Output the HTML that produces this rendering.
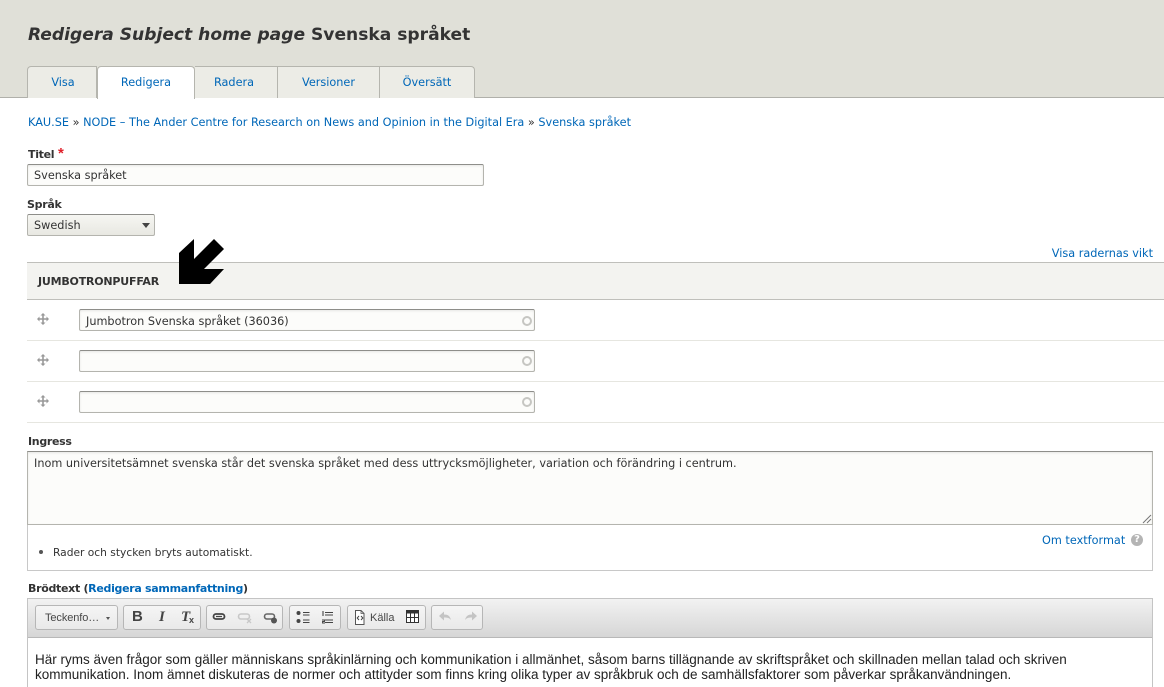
<!DOCTYPE html>
<html><head><meta charset="utf-8"><style>
html,body{margin:0;padding:0;background:#fff;width:1164px;height:687px;overflow:hidden}
body{position:relative;font-family:"DejaVu Sans","Liberation Sans",sans-serif;font-size:11.27px;color:#333}
.t{position:absolute;white-space:nowrap;line-height:14px}
a,.l{color:#0067b8;text-decoration:none}
.b{position:absolute;box-sizing:border-box}
.tab{position:absolute;top:66px;height:32px;box-sizing:border-box;background:#ecece6;border:1px solid #b5b5ae;border-bottom:0;border-left:0;text-align:center;line-height:32px;color:#0067b8;font-size:11.27px}
.inp{position:absolute;box-sizing:border-box;background:#fcfcfa;border:1px solid #b4b4ae;border-top-color:#8e8e8a;border-radius:2px;box-shadow:inset 0 1px 2px rgba(0,0,0,.09)}
.ac{position:absolute;width:10px;height:10px;border:2px solid #c6c6c2;border-radius:50%;box-sizing:border-box}
.lab{font-weight:bold;color:#333;font-size:11px;letter-spacing:-.3px}
.grp{position:absolute;top:605px;height:25px;box-sizing:border-box;border:1px solid #b6b6b6;border-radius:3px;background:linear-gradient(#f5f5f5,#e9e9e9)}
</style></head><body>
<div class="b" style="left:0;top:0;width:1164px;height:98px;background:#e0e0d8;border-bottom:1px solid #b0b0aa"></div>
<div class="t" style="left:28px;top:23px;font-size:17.1px;line-height:24px;font-weight:bold;color:#333"><i>Redigera Subject home page</i> Svenska språket</div>

<div class="tab" style="left:27px;width:70px;border-left:1px solid #b5b5ae;border-radius:4px 0 0 0;padding-left:2px">Visa</div>
<div class="tab" style="left:97px;width:98px;background:#fff;height:33px;border-left:1px solid #b5b5ae;border-radius:4px 4px 0 0">Redigera</div>
<div class="tab" style="left:195px;width:83px;padding-right:4px">Radera</div>
<div class="tab" style="left:278px;width:102px">Versioner</div>
<div class="tab" style="left:380px;width:95px;border-radius:0 4px 0 0">Översätt</div>

<div class="t" style="left:28px;top:116px"><a>KAU.SE</a> » <a>NODE – The Ander Centre for Research on News and Opinion in the Digital Era</a> » <a>Svenska språket</a></div>

<div class="t lab" style="left:28px;top:148px">Titel</div>
<div class="t" style="left:58px;top:147px;color:#e0202a;font:bold 15px/14px 'Liberation Sans',sans-serif">*</div>
<div class="inp" style="left:27px;top:164px;width:457px;height:22px"></div>
<div class="t" style="left:34px;top:169px">Svenska språket</div>

<div class="t lab" style="left:27px;top:198px">Språk</div>
<div class="inp" style="left:27px;top:214px;width:128px;height:22px;background:linear-gradient(#f6f6f2,#e8e8e2);box-shadow:none"></div>
<div class="t" style="left:34px;top:219px">Swedish</div>
<div class="b" style="left:142px;top:223px;width:0;height:0;border-left:4.5px solid transparent;border-right:4.5px solid transparent;border-top:5.5px solid #444"></div>

<div class="t" style="right:11px;top:247px"><a>Visa radernas vikt</a></div>

<div class="b" style="left:27px;top:262px;width:1137px;height:38px;background:#f3f3f0;border-top:1px solid #bfbfbb;border-bottom:1px solid #bfbfbb"></div>
<div class="t lab" style="left:38px;top:275px;font-size:11px;letter-spacing:-.2px">JUMBOTRONPUFFAR</div>

<svg class="b" style="left:0;top:0" width="1164" height="687">
<polygon fill="#000" points="194,239 194,259 214,239 224,249 204,269 224,269 210,284 179,284 179,253"/>
<g fill="#999">
<path d="M43 313l2.500 2.500h-1.700v2.700h2.700v-1.700l2.500 2.500-2.500 2.500v-1.700h-2.700v2.700h1.700l-2.500 2.500-2.500-2.500h1.700v-2.700h-2.700v1.700l-2.500-2.500 2.500-2.500v1.700h2.700v-2.700h-1.700z"/>
<path d="M43 354l2.500 2.500h-1.700v2.700h2.700v-1.700l2.500 2.500-2.500 2.500v-1.700h-2.700v2.700h1.700l-2.500 2.500-2.500-2.500h1.700v-2.700h-2.700v1.700l-2.500-2.500 2.500-2.500v1.700h2.700v-2.700h-1.700z"/>
<path d="M43 395l2.500 2.500h-1.700v2.700h2.700v-1.700l2.500 2.500-2.500 2.500v-1.700h-2.700v2.700h1.700l-2.500 2.500-2.500-2.500h1.700v-2.700h-2.700v1.700l-2.500-2.500 2.500-2.500v1.700h2.700v-2.700h-1.700z"/>
</g>
</svg>

<div class="b" style="left:27px;top:340px;width:1137px;height:1px;background:#e6e6e0"></div>
<div class="b" style="left:27px;top:381px;width:1137px;height:1px;background:#e6e6e0"></div>
<div class="b" style="left:27px;top:422px;width:1137px;height:1px;background:#e6e6e0"></div>

<div class="inp" style="left:79px;top:309px;width:456px;height:22px"></div>
<div class="t" style="left:86px;top:315px">Jumbotron Svenska språket (36036)</div>
<div class="ac" style="left:522px;top:316px"></div>
<div class="inp" style="left:79px;top:350px;width:456px;height:22px"></div>
<div class="ac" style="left:522px;top:356px"></div>
<div class="inp" style="left:79px;top:391px;width:456px;height:22px"></div>
<div class="ac" style="left:522px;top:397px"></div>

<div class="t lab" style="left:28px;top:435px">Ingress</div>
<div class="b" style="left:27px;top:524px;width:1126px;height:47px;border:1px solid #c8c8c8"></div>
<div class="inp" style="left:27px;top:451px;width:1126px;height:74px;border-radius:0"></div>
<div class="t" style="left:34px;top:457px">Inom universitetsämnet svenska står det svenska språket med dess uttrycksmöjligheter, variation och förändring i centrum.</div>
<svg class="b" style="left:1142px;top:514px" width="10" height="10"><path d="M1 9L9 1M5 9L9 5" stroke="#777" stroke-width="1"/></svg>

<div class="b" style="left:39px;top:550px;width:4px;height:4px;background:#555;border-radius:50%"></div>
<div class="t" style="left:53px;top:546px;font-size:10.66px">Rader och stycken bryts automatiskt.</div>
<div class="t" style="left:1042px;top:534px"><a>Om textformat</a></div>
<div class="b" style="left:1131px;top:534px;width:12px;height:12px;border-radius:50%;background:#b4b4b4;color:#fff;font-size:10px;font-weight:bold;line-height:12px;text-align:center">?</div>

<div class="t lab" style="left:28px;top:582px">Brödtext (<span class="l">Redigera sammanfattning</span>)</div>

<div class="b" style="left:27px;top:598px;width:1126px;height:89px;background:#fff;border:1px solid #c4c4c4;border-bottom:0"></div>
<div class="b" style="left:28px;top:599px;width:1124px;height:39px;background:linear-gradient(#f2f2f2,#d6d6d6);border-bottom:1px solid #b8b8b8"></div>

<div class="grp" style="left:35px;width:83px"></div>
<div class="t" style="left:45px;top:611px;font-family:'Liberation Sans',sans-serif;font-size:11px;letter-spacing:-.1px;color:#474747">Teckenfo…</div>
<div class="b" style="left:106px;top:617px;width:0;height:0;border-left:2.5px solid transparent;border-right:2.5px solid transparent;border-top:3px solid #555"></div>

<div class="grp" style="left:123px;width:78px"></div>
<div class="t" style="left:132px;top:610px;font:bold 15px/14px 'Liberation Sans',sans-serif;color:#444">B</div>
<div class="t" style="left:159px;top:610px;font:italic bold 15px/14px 'Liberation Serif',serif;color:#444">I</div>
<div class="t" style="left:181px;top:610px;font:italic bold 15px/14px 'Liberation Serif',serif;color:#444">T</div>
<div class="t" style="left:189px;top:615px;font:bold 9px/10px 'Liberation Sans',sans-serif;color:#444">x</div>

<div class="grp" style="left:206px;width:77px"></div>
<svg class="b" style="left:206px;top:605px" width="77" height="25">
<rect x="7.500" y="9" width="11" height="5" rx="2.500" fill="none" stroke="#444" stroke-width="1.800"/><path d="M10 11.500h6" stroke="#444" stroke-width="1.200"/>
<rect x="32.500" y="9" width="11" height="5" rx="2.500" fill="none" stroke="#c8c8c8" stroke-width="1.600"/><path d="M41 14l4 4m0-4l-4 4" stroke="#c8c8c8" stroke-width="1.300"/>
<rect x="58.500" y="9" width="10" height="5" rx="2.500" fill="none" stroke="#666" stroke-width="1.600"/><circle cx="68" cy="15.500" r="3" fill="#555"/>
</svg>

<div class="grp" style="left:289px;width:52px"></div>
<svg class="b" style="left:289px;top:605px" width="52" height="25">
<circle cx="9.500" cy="8" r="2" fill="#444"/><circle cx="9.500" cy="16" r="2" fill="#444"/><path d="M14 7.500h6.500M14 10h6.500M14 15h6.500M14 17.500h6.500" stroke="#444" stroke-width="1"/>
<path d="M36 7.500h8M36 10h8M36 15h8M36 17.500h8" stroke="#444" stroke-width="1"/><path d="M34 6v5" stroke="#444" stroke-width="1.100"/><path d="M33 15h2.500v1.500h-2v1.500h2.500" fill="none" stroke="#444" stroke-width=".9"/>
</svg>

<div class="grp" style="left:347px;width:79px"></div>
<svg class="b" style="left:347px;top:605px" width="79" height="25">
<path d="M8.500 5.500h5.500l3 3v11h-8.500z" fill="#fff" stroke="#555"/><path d="M14 5.500v3h3" fill="none" stroke="#555" stroke-width=".8"/><path d="M12 11l-1.800 2 1.800 2M14 11l1.800 2-1.800 2" fill="none" stroke="#444"/>
<rect x="59.500" y="5.500" width="12" height="12" fill="#fff" stroke="#333"/><rect x="59" y="5" width="13" height="3.500" fill="#333"/><path d="M59.500 12.500h12M63.500 8v10M67.500 8v10" stroke="#333"/>
</svg>
<div class="t" style="left:370px;top:611px;font-family:'Liberation Sans',sans-serif;font-size:11px;color:#474747">Källa</div>

<div class="grp" style="left:431px;width:52px"></div>
<svg class="b" style="left:431px;top:605px" width="52" height="25">
<path d="M8 11l5-4.500v3c4 0 6 1.500 7 5.500-1.500-2-3.500-2.500-7-2.500v3z" fill="#c4c4c4"/>
<path d="M46 11l-5-4.500v3c-4 0-6 1.500-7 5.500 1.500-2 3.500-2.500 7-2.500v3z" fill="#c4c4c4"/>
</svg>

<div class="t" style="left:35px;top:652px;font-family:'Liberation Sans',sans-serif;font-size:13.5px;line-height:15px;color:#222;white-space:pre">Här ryms även frågor som gäller människans språkinlärning och kommunikation i allmänhet, såsom barns tillägnande av skriftspråket och skillnaden mellan talad och skriven
kommunikation. Inom ämnet diskuteras de normer och attityder som finns kring olika typer av språkbruk och de samhällsfaktorer som påverkar språkanvändningen.</div>
</body></html>
